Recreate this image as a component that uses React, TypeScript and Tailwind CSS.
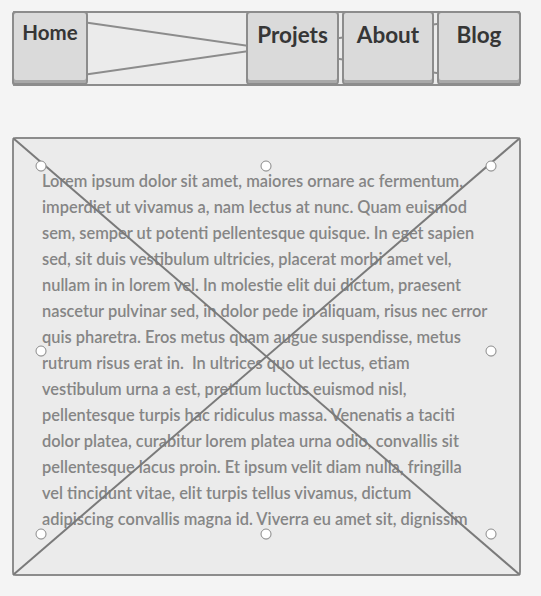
import React from "react";

const lines = [
  "Lorem ipsum dolor sit amet, maiores ornare ac fermentum,",
  "imperdiet ut vivamus a, nam lectus at nunc. Quam euismod",
  "sem, semper ut potenti pellentesque quisque. In eget sapien",
  "sed, sit duis vestibulum ultricies, placerat morbi amet vel,",
  "nullam in in lorem vel. In molestie elit dui dictum, praesent",
  "nascetur pulvinar sed, in dolor pede in aliquam, risus nec error",
  "quis pharetra. Eros metus quam augue suspendisse, metus",
  "rutrum risus erat in.\u00a0 In ultrices quo ut lectus, etiam",
  "vestibulum urna a est, pretium luctus euismod nisl,",
  "pellentesque turpis hac ridiculus massa. Venenatis a taciti",
  "dolor platea, curabitur lorem platea urna odio, convallis sit",
  "pellentesque lacus proin. Et ipsum velit diam nulla, fringilla",
  "vel tincidunt vitae, elit turpis tellus vivamus, dictum",
  "adipiscing convallis magna id. Viverra eu amet sit, dignissim",
];

const handles: [number, number][] = [
  [41, 166], [266, 166], [491, 166],
  [41, 351], [491, 351],
  [41, 534], [266, 534], [491, 534],
];

function NavButton({ label, w, size }: { label: string; w: string; size: string }) {
  return (
    <div
      className={`${w} h-[74px] shrink-0 rounded-[4px] border-2 border-[#8c8c8c] bg-[#dadada] shadow-[inset_0_-3px_0_#a8a8a8] flex justify-center ${size} font-bold text-[#363636]`}
    >
      {label}
    </div>
  );
}

export default function App() {
  return (
    <div
      className="w-[541px] h-[596px] bg-[#f4f4f4] pt-[11px] pl-[12px] overflow-hidden"
      style={{ fontFamily: "Lato, 'Open Sans', sans-serif" }}
    >
      {/* Nav */}
      <div className="relative w-[509px] h-[75px] rounded-[4px] border-2 border-[#8c8c8c] bg-[#ebebeb]">
        <svg className="absolute -left-[2px] -top-[2px]" width="509" height="75" viewBox="0 0 509 75">
          <line x1="1" y1="1" x2="508" y2="74" stroke="#8c8c8c" strokeWidth="2" />
          <line x1="1" y1="74" x2="508" y2="1" stroke="#8c8c8c" strokeWidth="2" />
        </svg>
        <div className="relative -m-[2px] flex h-[75px] items-start">
          <NavButton label="Home" w="w-[76px]" size="text-[20.5px] leading-[24px] pt-[7px]" />
          <div className="flex-1" />
          <NavButton label="Projets" w="w-[93px]" size="text-[22.5px] leading-[26px] pt-[9px]" />
          <div className="w-[3px]" />
          <NavButton label="About" w="w-[92px]" size="text-[22.5px] leading-[26px] pt-[9px]" />
          <div className="w-[3px]" />
          <NavButton label="Blog" w="w-[84px]" size="text-[22.5px] leading-[26px] pt-[9px]" />
        </div>
      </div>

      {/* Content */}
      <div className="relative mt-[51px] w-[509px] h-[439px] rounded-[4px] border-2 border-[#8c8c8c] bg-[#ebebeb] pl-[28px] pt-[29px]">
        <div className="flex flex-col text-[16.4px] leading-[26px] font-semibold text-[#858585]">
          {lines.map((l, i) => (
            <div key={i} className="whitespace-pre">{l}</div>
          ))}
        </div>
        <svg className="absolute -left-[2px] -top-[2px]" width="509" height="439" viewBox="0 0 509 439">
          <line x1="1" y1="1" x2="508" y2="438" stroke="#7a7a7a" strokeWidth="2" />
          <line x1="1" y1="438" x2="508" y2="1" stroke="#7a7a7a" strokeWidth="2" />
          {handles.map(([x, y], i) => (
            <g key={i}>
              <circle cx={x - 12 + 0.5} cy={y - 137 + 1} r="5" fill="#c8c8c8" opacity="0.6" />
              <circle
                cx={x - 12}
                cy={y - 137}
                r="5"
                fill="#ffffff"
                stroke="#8c8c8c"
                strokeWidth="1"
              />
            </g>
          ))}
        </svg>
      </div>
    </div>
  );
}
